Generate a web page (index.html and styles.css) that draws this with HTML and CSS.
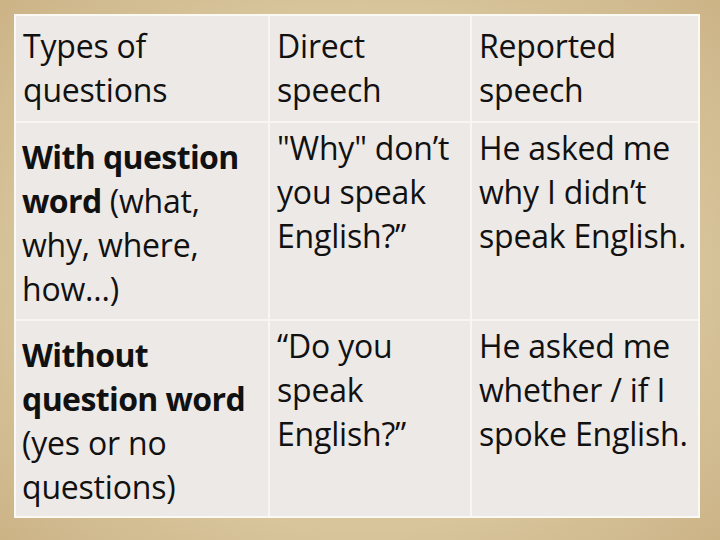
FILE: index.html
```html
<!DOCTYPE html>
<html>
<head>
<meta charset="utf-8">
<link rel="stylesheet" href="styles.css">
</head>
<body>
<div class="grid">
  <div class="cell head">Types of<br>questions</div>
  <div class="cell head">Direct<br>speech</div>
  <div class="cell head">Reported<br>speech</div>

  <div class="cell first"><b>With question</b><br><b>word</b> (what,<br>why, where,<br>how…)</div>
  <div class="cell">"Why" don’t<br>you speak<br>English?”</div>
  <div class="cell">He asked me<br>why I didn’t<br>speak English.</div>

  <div class="cell first"><b>Without</b><br><b>question word</b><br>(yes or no<br>questions)</div>
  <div class="cell">“Do you<br>speak<br>English?”</div>
  <div class="cell">He asked me<br>whether / if I<br>spoke English.</div>
</div>
</body>
</html>
```
FILE: styles.css
```css
html, body {
  margin: 0;
  padding: 0;
}
body {
  width: 720px;
  height: 540px;
  overflow: hidden;
  background: radial-gradient(ellipse 75% 80% at 50% 50%, #e2d3b0 0%, #d8c59c 60%, #c8ae80 100%);
  font-family: "Open Sans", "Noto Sans", sans-serif;
  color: #111;
}
.grid {
  margin: 14px 0 0 14px;
  width: 682px;
  height: 500px;
  border: 2px solid #fbf9f4;
  background: #f9f6f2;
  display: grid;
  grid-template-columns: 252px 200px 226px;
  grid-template-rows: 105px 196px 195px;
  gap: 2px;
}
.cell {
  background: #ede9e6;
  font-size: 32px;
  line-height: 44px;
  white-space: nowrap;
  padding: 3px 0 0 7px;
  letter-spacing: -0.2px;
}
.cell.head {
  padding-top: 8px;
}
.cell.first {
  padding-top: 12px;
  padding-left: 6px;
}
.cell b {
  font-weight: 700;
  letter-spacing: -0.6px;
}
```
